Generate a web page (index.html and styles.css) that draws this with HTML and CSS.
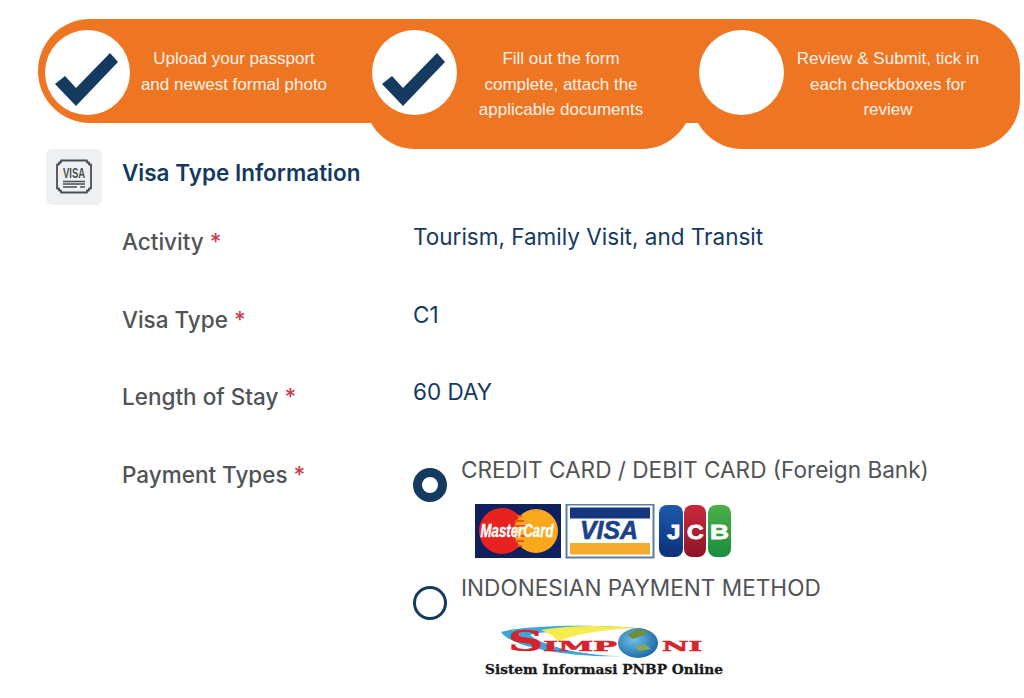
FILE: index.html
```html
<!DOCTYPE html>
<html lang="en">
<head>
<meta charset="utf-8">
<title>Visa Type Information</title>
<link rel="stylesheet" href="styles.css">
</head>
<body>
<div class="stepper">
  <div class="step step-first">
    <span class="step-circle">
      <svg class="check" viewBox="0 0 85 85"><polygon points="10,54 20,46 31,58 65,23 73,32 31,76"/></svg>
    </span>
    <p class="step-text">Upload your passport<br>and newest formal photo</p>
  </div>
  <div class="step step-middle">
    <span class="step-circle">
      <svg class="check" viewBox="0 0 85 85"><polygon points="10,54 20,46 31,58 65,23 73,32 31,76"/></svg>
    </span>
    <p class="step-text">Fill out the form<br>complete, attach the<br>applicable documents</p>
  </div>
  <div class="step step-last">
    <span class="step-circle"></span>
    <p class="step-text">Review &amp; Submit, tick in<br>each checkboxes for<br>review</p>
  </div>
</div>

<section class="section">
  <header class="section-head">
    <span class="section-icon">
      <svg viewBox="0 0 40 40" class="ticket">
        <path d="M7 3.500H33V5.500H35V7.500H37V31.500H35V33.500H33V35.500H7V33.500H5V31.500H3V7.500H5V5.500H7Z" fill="none" stroke="#4a4d52" stroke-width="1.800" stroke-linejoin="round"/>
        <text transform="translate(20 20.500) scale(1 1.450)" class="ticket-text" text-anchor="middle">VISA</text>
        <path d="M9 24.500H31M9 27H31M9 30H23M26 30H31" stroke="#4a4d52" stroke-width="1.300" fill="none"/>
      </svg>
    </span>
    <h2 class="section-title">Visa Type Information</h2>
  </header>

  <div class="form">
    <div class="form-row">
      <div class="label">Activity <span class="req">*</span></div>
      <div class="value">Tourism, Family Visit, and Transit</div>
    </div>
    <div class="form-row">
      <div class="label">Visa Type <span class="req">*</span></div>
      <div class="value">C1</div>
    </div>
    <div class="form-row">
      <div class="label">Length of Stay <span class="req">*</span></div>
      <div class="value">60 DAY</div>
    </div>
    <div class="form-row form-row-pay">
      <div class="label">Payment Types <span class="req">*</span></div>
      <div class="pay-options">
        <div class="pay-option pay-card">
          <span class="radio radio-on"></span>
          <div class="pay-body">
            <div class="pay-name">CREDIT CARD / DEBIT CARD (Foreign Bank)</div>
            <svg class="cards" viewBox="0 0 258 56" width="258" height="56">
              <rect x="0" y="0" width="86" height="54" fill="#10205f"/>
              <circle cx="27" cy="27" r="23" fill="#e8231f"/>
              <circle cx="61" cy="27" r="22" fill="#f9a71c"/>
              <path d="M42 12H47M40 17H49M40 22H50M40 32H50M40 37H49M42 42H47" stroke="#e8531f" stroke-width="2"/>
              <text x="42" y="33" class="mc-text" text-anchor="middle" textLength="73" lengthAdjust="spacingAndGlyphs">MasterCard</text>
              <rect x="91.500" y="0.500" width="87" height="53" fill="#fff" stroke="#5b7da0" stroke-width="2"/>
              <rect x="95" y="3.500" width="80" height="11" fill="#15357f"/>
              <rect x="95" y="39" width="80" height="11.500" fill="#f4ab2e"/>
              <text x="134" y="35" class="visa-text" text-anchor="middle" textLength="58" lengthAdjust="spacingAndGlyphs">VISA</text>
              <defs>
                <linearGradient id="jb" x1="0" y1="0" x2="0" y2="1"><stop offset="0" stop-color="#1d5aab"/><stop offset="1" stop-color="#0c2f7c"/></linearGradient>
                <linearGradient id="jr" x1="0" y1="0" x2="0" y2="1"><stop offset="0" stop-color="#c92a3c"/><stop offset="1" stop-color="#8c1526"/></linearGradient>
                <linearGradient id="jg" x1="0" y1="0" x2="0" y2="1"><stop offset="0" stop-color="#4cb04a"/><stop offset="1" stop-color="#1a8c3e"/></linearGradient>
              </defs>
              <rect x="184" y="1" width="24" height="52" rx="8" fill="url(#jb)"/>
              <rect x="209" y="1" width="22" height="52" rx="8" fill="url(#jr)"/>
              <rect x="233" y="1" width="23" height="52" rx="8" fill="url(#jg)"/>
              <text transform="translate(192 35) scale(1.150 1)" class="jcb-text">J</text>
              <text transform="translate(212 35) scale(1.100 1)" class="jcb-text">C</text>
              <text transform="translate(235 35) scale(1.250 1)" class="jcb-text">B</text>
            </svg>
          </div>
        </div>
        <div class="pay-option pay-local">
          <span class="radio"></span>
          <div class="pay-body">
            <div class="pay-name">INDONESIAN PAYMENT METHOD</div>
            <svg class="simponi" viewBox="0 0 240 58" width="240" height="58">
              <path d="M17 10C40 3 110 2 153 6C110 6 58 9 46 13C62 26 105 34 138 34C95 36 28 27 17 10Z" fill="#3aa6dc"/>
              <path d="M57 8C85 3 125 3 153 6C128 7 90 11 74 20C72 15 64 11 57 8Z" fill="#f6ec4e"/>
              <defs>
                <radialGradient id="globe" cx="0.400" cy="0.400" r="0.700"><stop offset="0" stop-color="#6fc0ea"/><stop offset="1" stop-color="#14609f"/></radialGradient>
              </defs>
              <text transform="translate(24 29) scale(1.750 1)" class="sim-s">S</text>
              <text x="59" y="29" class="sim-rest" textLength="74" lengthAdjust="spacingAndGlyphs">IMP</text>
              <ellipse cx="154" cy="21" rx="20" ry="15" fill="url(#globe)"/>
              <path d="M143 13L154 7L165 10L157 14L149 17Z" fill="#6e8f3a"/>
              <path d="M151 25L161 22L167 27L155 29Z" fill="#8aa65a"/>
              <text x="178" y="29" class="sim-rest" textLength="40" lengthAdjust="spacingAndGlyphs">NI</text>
              <text x="1" y="52" class="sim-tag" textLength="238" lengthAdjust="spacingAndGlyphs">Sistem Informasi PNBP Online</text>
            </svg>
          </div>
        </div>
      </div>
    </div>
  </div>
</section>
</body>
</html>
```

FILE: styles.css
```css
* { box-sizing: border-box; }

html, body {
  margin: 0;
  height: 698px;
  overflow: hidden;
  background: #fff;
}

body {
  padding: 19px 4px 0 38px;
  font-family: Inter, "Liberation Sans", sans-serif;
}

/* stepper */
.stepper {
  display: grid;
  grid-template-columns: 327px 327px 1fr;
  height: 130px;
  position: relative;
}

.stepper::before {
  content: "";
  position: absolute;
  top: 0;
  left: 60px;
  right: 60px;
  height: 104px;
  background: #ee7623;
}

.step {
  position: relative;
  display: flex;
  align-items: flex-start;
  padding: 11px 0 0 7px;
  background: #ee7623;
}

.step-first {
  height: 104px;
  border-radius: 52px 0 0 52px;
}

.step-middle {
  border-radius: 0 0 50px 50px;
}

.step-last {
  border-radius: 0 50px 50px 50px;
}

.step-circle {
  flex: none;
  width: 85px;
  height: 85px;
  border-radius: 50%;
  background: #fff;
}

.check {
  display: block;
  width: 85px;
  height: 85px;
  fill: #153a60;
}

.step-text {
  width: 208px;
  margin: 16px 0 0;
  font-family: "Liberation Sans", Arial, sans-serif;
  font-size: 17px;
  line-height: 25.500px;
  text-align: center;
  color: #fdf1e7;
}

/* section head */
.section-head {
  display: flex;
  align-items: center;
  gap: 20px;
  margin-left: 8px;
}

.section-icon {
  display: flex;
  align-items: center;
  justify-content: center;
  width: 56px;
  height: 56px;
  background: #eef0f3;
  border-radius: 6px;
}

.ticket {
  width: 40px;
  height: 40px;
}

.ticket-text {
  font-family: "Liberation Sans", sans-serif;
  font-weight: 700;
  font-size: 9.500px;
  fill: #4a4d52;
}

.section-title {
  margin: 0 0 8px;
  font-size: 22.500px;
  font-weight: 600;
  line-height: 32px;
  color: #153a60;
}

/* rows */
.form {
  padding: 17px 0 0 84px;
}

.form-row {
  display: grid;
  grid-template-columns: 291px 1fr;
  height: 77.700px;
}

.label {
  padding-top: 5px;
  font-size: 22.500px;
  font-weight: 500;
  line-height: 30px;
  color: #505357;
}

.req {
  color: #c93a4e;
}

.value {
  font-size: 22.500px;
  line-height: 30px;
  color: #153a60;
}

/* payment */
.pay-options {
  display: flex;
  flex-direction: column;
}

.pay-option {
  display: flex;
  gap: 14px;
}

.pay-card {
  height: 118px;
}

.radio {
  flex: none;
  width: 34px;
  height: 34px;
  margin-top: 13px;
  border: 3px solid #153a60;
  border-radius: 50%;
  background: #fff;
}

.radio-on {
  border-width: 9px;
}

.pay-name {
  font-size: 22.600px;
  line-height: 30px;
  color: #505357;
}

.cards {
  display: block;
  margin: 19px 0 0 14px;
}

.simponi {
  display: block;
  margin: 19px 0 0 23px;
}

.mc-text {
  font-family: "Liberation Sans", sans-serif;
  font-size: 18px;
  font-weight: 700;
  font-style: italic;
  fill: #fff;
  stroke: #fff;
  stroke-width: 0.400px;
}

.visa-text {
  font-family: "Liberation Sans", sans-serif;
  font-size: 25px;
  font-weight: 700;
  font-style: italic;
  fill: #1a4288;
  stroke: #1a4288;
  stroke-width: 0.600px;
}

.jcb-text {
  font-family: "Liberation Sans", sans-serif;
  font-size: 21px;
  font-weight: 700;
  fill: #fff;
  stroke: #fff;
  stroke-width: 0.800px;
}

.sim-s {
  font-family: "DejaVu Serif", serif;
  font-weight: 700;
  font-size: 28px;
  fill: #d8222c;
  stroke: #d8222c;
  stroke-width: 0.400px;
}

.sim-rest {
  font-family: "DejaVu Serif", serif;
  font-weight: 700;
  font-size: 13px;
  fill: #d8222c;
  stroke: #d8222c;
  stroke-width: 0.500px;
}

.sim-tag {
  font-family: "DejaVu Serif", serif;
  font-weight: 700;
  font-size: 12.500px;
  fill: #1a1a1a;
  stroke: #1a1a1a;
  stroke-width: 0.300px;
}
```
